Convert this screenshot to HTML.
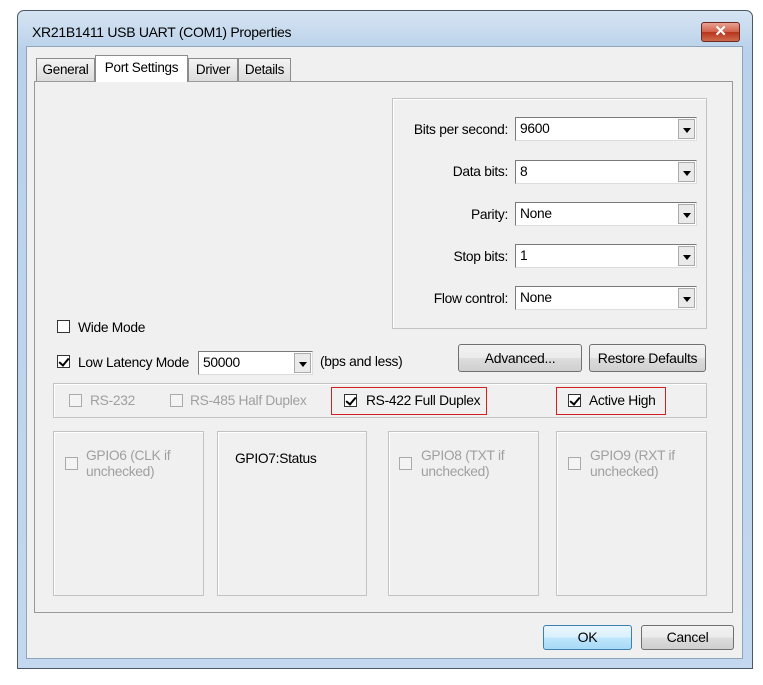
<!DOCTYPE html>
<html><head><style>
*{box-sizing:border-box;margin:0;padding:0}
body{width:763px;height:685px;background:#fff;position:relative;font-family:"Liberation Sans",sans-serif;font-size:13.8px;color:#000;overflow:hidden;letter-spacing:-0.3px}
.a{position:absolute}
.win{left:17px;top:10px;width:736px;height:659px;border:1px solid #4a5866;border-radius:7px 7px 0 0;background:linear-gradient(#d6e4f2,#b9d1ea 40px,#c3d8ee);}
.client{left:26px;top:46px;width:717px;height:613px;background:#f0f0f0;border:1px solid #8ea4ba}
.panel{left:34px;top:81px;width:699px;height:532px;background:#f0f0f0;border:1px solid #999}
.tab{height:23px;border:1px solid #8c8c8c;border-bottom:none;background:linear-gradient(#f4f4f4,#dcdcdc);text-align:center;line-height:21px;font-size:13.5px}
.grp{border:1px solid #c3c3c3;box-shadow:inset 1px 1px 0 #fff}
.combo{height:24px;width:182px;background:#fff;border:1px solid #7a7a7a;border-right-color:#ddd;border-bottom-color:#ddd;padding-left:4px;line-height:22px}
.combo .arr{position:absolute;right:1px;top:1px;width:17px;height:20px;background:#eaeaea;border:1px solid #aaa}
.combo .arr:after{content:"";position:absolute;left:4px;top:8px;border:4px solid transparent;border-top:5px solid #000}
.lbl{text-align:right;width:120px}
.cb{width:13px;height:13px;border:1px solid #333;background:#fff}
.cb.d{border-color:#aaa;background:#f4f4f4}
.ck:after{content:"";position:absolute;left:3px;top:0px;width:4px;height:8px;border:solid #000;border-width:0 2px 2px 0;transform:rotate(40deg)}
.btn{border:1px solid #707070;border-radius:3px;background:linear-gradient(#f2f2f2,#ebebeb 50%,#dddddd 51%,#cfcfcf);text-align:center;font-size:14px}
.gray{color:#a0a0a0}
</style></head><body>
<div class="a win"></div>
<div class="a" style="left:32px;top:24px;font-size:14px;color:#000">XR21B1411 USB UART (COM1) Properties</div>
<div class="a" style="left:701px;top:22px;width:39px;height:20px;border:1px solid #6b2a22;border-radius:3px;background:linear-gradient(#e8a193,#d0604a 50%,#b8341c 51%,#cf6a4c);color:#fff;font-weight:bold;text-align:center;line-height:18px;font-size:15px">✕</div>
<div class="a client"></div>
<div class="a panel"></div>
<div class="a tab" style="left:36px;top:58px;width:59px">General</div>
<div class="a tab" style="left:188px;top:58px;width:50px">Driver</div>
<div class="a tab" style="left:238px;top:58px;width:53px">Details</div>
<div class="a tab" style="left:95px;top:55px;width:93px;height:27px;background:#fff;line-height:24px">Port Settings</div>

<div class="a grp" style="left:392px;top:98px;width:315px;height:231px"></div>
<div class="a lbl" style="left:388px;top:122px">Bits per second:</div>
<div class="a combo" style="left:515px;top:117px">9600<div class="arr"></div></div>
<div class="a lbl" style="left:388px;top:164px">Data bits:</div>
<div class="a combo" style="left:515px;top:160px">8<div class="arr"></div></div>
<div class="a lbl" style="left:388px;top:207px">Parity:</div>
<div class="a combo" style="left:515px;top:202px">None<div class="arr"></div></div>
<div class="a lbl" style="left:388px;top:249px">Stop bits:</div>
<div class="a combo" style="left:515px;top:244px">1<div class="arr"></div></div>
<div class="a lbl" style="left:388px;top:291px">Flow control:</div>
<div class="a combo" style="left:515px;top:286px">None<div class="arr"></div></div>

<div class="a cb" style="left:57px;top:320px"></div>
<div class="a" style="left:78px;top:320px">Wide Mode</div>
<div class="a cb ck" style="left:57px;top:355px"></div>
<div class="a" style="left:78px;top:355px">Low Latency Mode</div>
<div class="a combo" style="left:198px;top:351px;width:115px">50000<div class="arr"></div></div>
<div class="a" style="left:320px;top:354px">(bps and less)</div>
<div class="a btn" style="left:458px;top:344px;width:124px;height:28px;line-height:26px">Advanced...</div>
<div class="a btn" style="left:589px;top:344px;width:117px;height:28px;line-height:26px">Restore Defaults</div>

<div class="a grp" style="left:53px;top:383px;width:654px;height:35px"></div>
<div class="a cb d" style="left:69px;top:394px"></div>
<div class="a gray" style="left:90px;top:393px">RS-232</div>
<div class="a cb d" style="left:170px;top:394px"></div>
<div class="a gray" style="left:190px;top:393px">RS-485 Half Duplex</div>
<div class="a" style="left:331px;top:387px;width:156px;height:28px;border:1px solid #d02020"></div>
<div class="a cb ck" style="left:344px;top:394px"></div>
<div class="a" style="left:366px;top:393px">RS-422 Full Duplex</div>
<div class="a" style="left:556px;top:387px;width:110px;height:28px;border:1px solid #d02020"></div>
<div class="a cb ck" style="left:568px;top:394px"></div>
<div class="a" style="left:589px;top:393px">Active High</div>

<div class="a grp" style="left:53px;top:431px;width:151px;height:165px"></div>
<div class="a grp" style="left:217px;top:431px;width:150px;height:165px"></div>
<div class="a grp" style="left:388px;top:431px;width:151px;height:165px"></div>
<div class="a grp" style="left:556px;top:431px;width:151px;height:165px"></div>
<div class="a cb d" style="left:65px;top:457px"></div>
<div class="a gray" style="left:86px;top:448px;line-height:16px">GPIO6 (CLK if<br>unchecked)</div>
<div class="a" style="left:235px;top:451px">GPIO7:Status</div>
<div class="a cb d" style="left:399px;top:457px"></div>
<div class="a gray" style="left:421px;top:448px;line-height:16px">GPIO8 (TXT if<br>unchecked)</div>
<div class="a cb d" style="left:568px;top:457px"></div>
<div class="a gray" style="left:590px;top:448px;line-height:16px">GPIO9 (RXT if<br>unchecked)</div>

<div class="a btn" style="left:543px;top:625px;width:89px;height:25px;line-height:23px;border-color:#3c7fb1;background:linear-gradient(#eaf6fd,#d9f0fc 50%,#bee6fd 51%,#a7d9f5)">OK</div>
<div class="a btn" style="left:641px;top:625px;width:93px;height:25px;line-height:23px">Cancel</div>
</body></html>
